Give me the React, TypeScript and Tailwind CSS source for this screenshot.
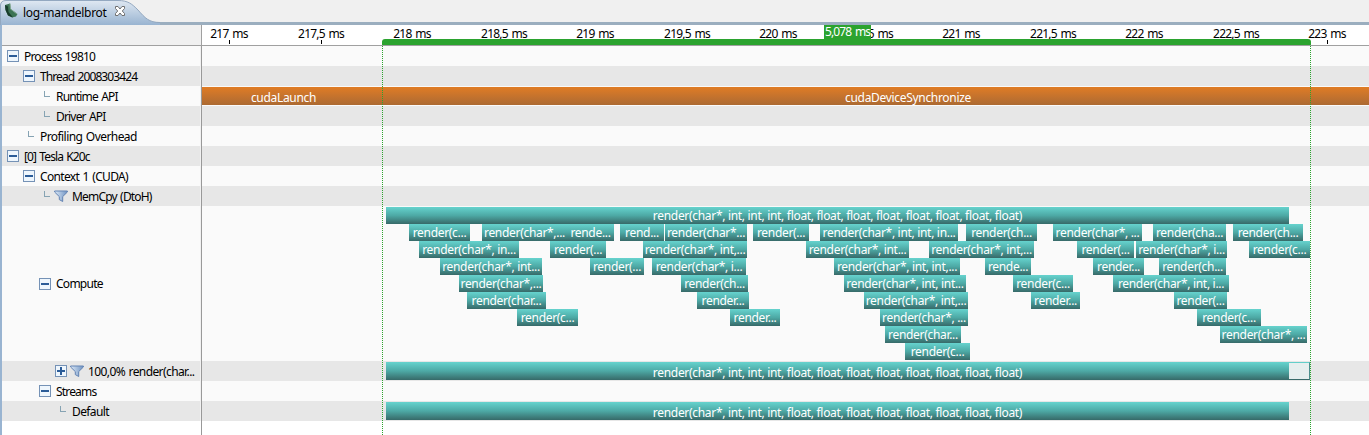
import React from "react";

type Span = [start: number, end: number, label: string];

const FULL =
  "render(char*, int, int, int, float, float, float, float, float, float, float, float)";

const ORIGIN = 202;

const LEVELS: Span[][] = [
  [[386, 1289, FULL]],
  [
    [409, 470, "render(c..."],
    [482, 567, "render(char*,..."],
    [567, 614, "rende..."],
    [620, 664, "rend..."],
    [665, 747, "render(char*..."],
    [753, 809, "render(..."],
    [820, 958, "render(char*, int, int, in..."],
    [966, 1037, "render(ch..."],
    [1053, 1142, "render(char*, ..."],
    [1153, 1226, "render(cha..."],
    [1233, 1303, "render(ch..."],
  ],
  [
    [419, 519, "render(char*, in..."],
    [550, 606, "render(..."],
    [643, 747, "render(char*, int,..."],
    [806, 909, "render(char*, int..."],
    [929, 1034, "render(char*, int,..."],
    [1077, 1134, "render(..."],
    [1136, 1227, "render(char*, i..."],
    [1249, 1310, "render(c..."],
  ],
  [
    [440, 542, "render(char*, int..."],
    [590, 644, "render(..."],
    [652, 746, "render(char*, i..."],
    [834, 960, "render(char*, int, int,..."],
    [985, 1031, "rende..."],
    [1093, 1144, "render..."],
    [1159, 1226, "render(ch..."],
  ],
  [
    [459, 543, "render(char*,..."],
    [681, 748, "render(ch..."],
    [844, 966, "render(char*, int, int..."],
    [1013, 1073, "render(c..."],
    [1113, 1229, "render(char*, int, i..."],
  ],
  [
    [467, 546, "render(char..."],
    [697, 749, "render..."],
    [864, 968, "render(char*, int,..."],
    [1031, 1080, "render..."],
    [1174, 1227, "render(..."],
  ],
  [
    [517, 578, "render(c..."],
    [730, 780, "render..."],
    [880, 968, "render(char*, ..."],
    [1197, 1261, "render(c..."],
  ],
  [
    [885, 961, "render(char..."],
    [1220, 1307, "render(char*, ..."],
  ],
  [[905, 970, "render(c..."]],
];

const TICKS = [
  "217 ms", "217,5 ms", "218 ms", "218,5 ms", "219 ms", "219,5 ms", "220 ms",
  "220,5 ms", "221 ms", "221,5 ms", "222 ms", "222,5 ms", "223 ms",
];

function Kernel({ span, tall }: { span: Span; tall?: boolean }) {
  const [start, end, label] = span;
  return (
    <div
      className={`absolute top-0 flex items-center justify-center overflow-hidden whitespace-nowrap bg-linear-to-b from-[#66d3ce] via-[#4da9a5] to-[#376a69] text-white ${tall ? "h-[18px] pt-[3px]" : "h-[17px]"}`}
      style={{ left: start - ORIGIN, width: end - start }}
    >
      {label}
    </div>
  );
}

function Toggle({ plus }: { plus?: boolean }) {
  return (
    <svg className="h-3 w-3 shrink-0" viewBox="0 0 12 12" shapeRendering="crispEdges">
      <rect x="0.5" y="0.5" width="11" height="11" fill="#eef6fd" stroke="#7592b6" />
      <rect x="2" y="5" width="8" height="2" fill="#2b5c98" />
      {plus && <rect x="5" y="2" width="2" height="8" fill="#2b5c98" />}
    </svg>
  );
}

function Elbow() {
  return (
    <svg className="h-3 w-3 shrink-0" viewBox="0 0 12 12" shapeRendering="crispEdges">
      <path d="M5.5 1V6.5H11" fill="none" stroke="#86a3b3" />
    </svg>
  );
}

function Funnel() {
  return (
    <svg className="-ml-0.5 mr-1 h-3 w-[14px] shrink-0" viewBox="0 0 14 12">
      <defs>
        <linearGradient id="funnel" x1="0" x2="1">
          <stop offset="0" stopColor="#dbe8f6" />
          <stop offset="1" stopColor="#6f93c2" />
        </linearGradient>
      </defs>
      <path d="M0.6 1H13.4V2L8.7 6.6V11.5L5.3 9.6V6.6L0.6 2Z" fill="url(#funnel)" stroke="#6383b3" strokeWidth="1" />
    </svg>
  );
}

type RowProps = {
  label: string;
  indent: string;
  icon: React.ReactNode;
  shade?: boolean;
  funnel?: boolean;
  height?: string;
  tracking?: string;
  children?: React.ReactNode;
};

function Row({ label, indent, icon, shade, funnel, height = "h-5", tracking = "tracking-[-0.82px]", children }: RowProps) {
  return (
    <div className={`flex shrink-0 ${height} ${shade ? "bg-[#e7e7e7]" : "bg-[#fafafa]"}`}>
      <div className={`flex w-[199px] shrink-0 items-center border-r border-[#f1f1f1] ${indent}`}>
        {icon}
        <div className={`ml-[5px] flex items-center whitespace-nowrap text-black [word-spacing:1px] ${tracking}`}>
          {funnel && <Funnel />}
          {label}
        </div>
      </div>
      <div className="w-px shrink-0 bg-[#999999]" />
      <div className="relative grow overflow-hidden">{children}</div>
    </div>
  );
}

export default function App() {
  return (
    <div className="relative flex h-[435px] w-[1369px] flex-col overflow-hidden bg-white font-['Noto_Sans','Open_Sans',sans-serif] text-[12px] leading-[17px] tracking-[-0.31px] text-[#111111]">
      <header className="flex h-[25px] shrink-0 items-start border-b-[3px] border-[#9baebf] bg-[#f0f0f0]">
        <div className="relative h-[25px] w-[165px]">
          <svg className="absolute left-0 top-0 h-[25px] w-[165px]" viewBox="0 0 165 25">
            <defs>
              <linearGradient id="tab" x1="0" x2="0" y1="0" y2="1">
                <stop offset="0" stopColor="#dfe8f2" />
                <stop offset="1" stopColor="#99b4d1" />
              </linearGradient>
            </defs>
            <path d="M0 25V5Q1 0.5 6 0.5H118C128 0.5 132 4 138 10C145 18 149 22.5 160 22.5V25Z" fill="url(#tab)" />
            <path d="M0.5 25V5Q1 0.5 6 0.5H118C128 0.5 132 4 138 10C145 18 149 22.5 160 22.5" fill="none" stroke="#93a8c0" />
            <path d="M5 5L10 3.5L10.5 9L17.5 14L16 16.5L12 17.5L8 15.5L5.5 10Z" fill="#3c7354" />
            <path d="M5 5L8 6.5L8.5 12L13 17.5L8 15.5L5.5 10Z" fill="#183c2b" />
            <path d="M10 3.5L10.5 9L17 14" fill="none" stroke="#7fa58d" />
            <path d="M115.5 6.5H118L120 9L122 6.5H124.5V8.5L122.3 11L124.5 13.5V15.5H122L120 13L118 15.5H115.5V13.5L117.7 11L115.5 8.5Z" fill="#fff" stroke="#707070" />
          </svg>
          <div className="relative pl-[23px] pt-[4px] text-black">log-mandelbrot</div>
        </div>
      </header>
      <div className="flex min-h-0 grow">
        <div className="w-[2px] shrink-0 bg-[#99b4d1]" />
        <div className="flex grow flex-col">
          <div className="flex h-[21px] shrink-0 border-b border-[#a0a0a0]">
            <div className="w-[199px] shrink-0 bg-[#f0f0f0]" />
            <div className="w-px shrink-0 bg-[#a0a0a0]" />
            <div className="relative grow overflow-hidden bg-white tracking-[-0.8px] [word-spacing:1.5px]">
              {TICKS.map((label, i) => (
                <div
                  key={label}
                  className="absolute top-0 flex w-[60px] flex-col items-center whitespace-nowrap"
                  style={{ left: Math.floor(27.5 + i * 91.5) - 30 }}
                >
                  <div className="h-[15px] text-black">{label}</div>
                  <div className="h-1 w-px bg-black" />
                </div>
              ))}
              <div className="absolute left-[180px] top-[14px] h-[6px] w-[929px] rounded-t-[3px] bg-[#2ba32f]" />
              <div className="absolute left-[622px] top-0 h-[15px] w-[47px] whitespace-nowrap bg-[#2ba32f] pl-px leading-[14px] tracking-[-0.9px] text-white">
                5,078 ms
              </div>
            </div>
          </div>
          <Row label="Process 19810" indent="pl-[5px]" icon={<Toggle />} />
          <Row label="Thread 2008303424" indent="pl-[21px]" icon={<Toggle />} shade tracking="tracking-[-0.9px]" />
          <Row label="Runtime API" indent="pl-[37px]" icon={<Elbow />}>
            <div className="mt-px flex h-[18px] items-center bg-linear-to-b from-[#e07c24] to-[#ac6a32] pt-[3px] text-white">
              <div className="w-[163px] text-center">cudaLaunch</div>
              <div className="w-[1004px] pl-[480px]">cudaDeviceSynchronize</div>
            </div>
          </Row>
          <Row label="Driver API" indent="pl-[37px]" icon={<Elbow />} shade />
          <Row label="Profiling Overhead" indent="pl-[21px]" icon={<Elbow />} tracking="tracking-[-0.57px]" />
          <Row label="[0] Tesla K20c" indent="pl-[5px]" icon={<Toggle />} shade tracking="tracking-[-0.89px]" />
          <Row label="Context 1 (CUDA)" indent="pl-[21px]" icon={<Toggle />} tracking="tracking-[-0.67px]" />
          <Row label="MemCpy (DtoH)" indent="pl-[37px]" icon={<Elbow />} shade funnel />
          <Row label="Compute" indent="pl-[37px]" icon={<Toggle />} height="h-[155px]" tracking="tracking-[-0.73px]">
            <div className="flex flex-col pt-px">
              {LEVELS.map((level, i) => (
                <div key={i} className="relative h-[17px]">
                  {level.map((span) => (
                    <Kernel key={span[0]} span={span} />
                  ))}
                </div>
              ))}
            </div>
          </Row>
          <Row label="100,0% render(char..." indent="pl-[53px]" icon={<Toggle plus />} shade funnel tracking="tracking-[-0.6px]">
            <div className="relative mt-px h-[18px]">
              <div className="absolute left-[1080px] top-0 h-[18px] w-[28px] border border-t-[#62cfca] border-r-[#4a8f8c] border-b-[#376a69] bg-[#e5eeee]" />
              <Kernel span={[386, 1289, FULL]} tall />
            </div>
          </Row>
          <Row label="Streams" indent="pl-[37px]" icon={<Toggle />} />
          <Row label="Default" indent="pl-[53px]" icon={<Elbow />} shade tracking="tracking-[-0.6px]">
            <div className="relative mt-px h-[18px]">
              <Kernel span={[386, 1289, FULL]} tall />
            </div>
          </Row>
          <div className="flex grow pl-[199px]">
            <div className="w-px bg-[#999999]" />
          </div>
        </div>
      </div>
      <div className="absolute bottom-0 left-[382px] top-[46px] w-px bg-[repeating-linear-gradient(to_bottom,#2ba32f_0_1px,transparent_1px_2px)]" />
      <div className="absolute bottom-0 left-[1310px] top-[46px] w-px bg-[repeating-linear-gradient(to_bottom,#2ba32f_0_1px,transparent_1px_2px)]" />
    </div>
  );
}
